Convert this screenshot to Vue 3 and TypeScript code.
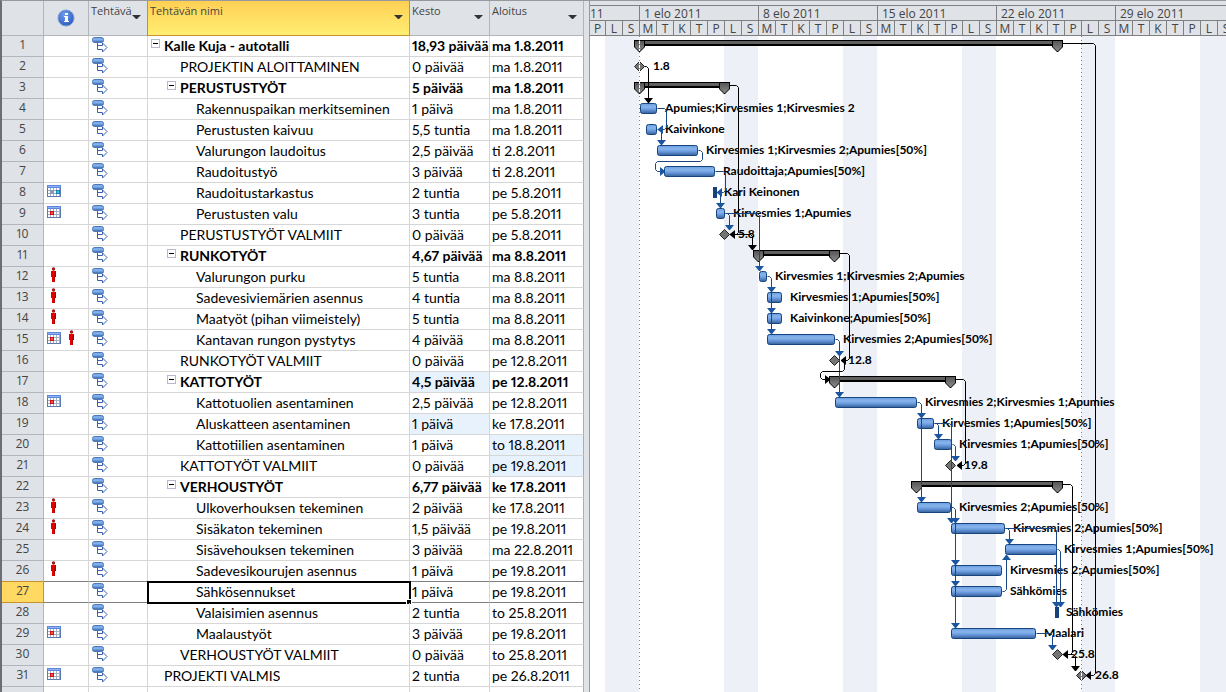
<script setup lang="ts">
type Kind = 'summary' | 'task' | 'milestone' | 'tick'
type Mark = 'cal' | 'calBlue' | 'person'

interface Task {
  id: number
  name: string
  level: number
  duration: string
  start: string
  kind: Kind
  from: number
  to: number
  label?: string
  labelX?: number
  marks?: Mark[]
  changed?: 'duration' | 'start'
}

const ROW = 21
const DAY = 17
const SELECTED = 27

// from, to and labelX are distances in pixels from Monday 1.8.2011
const tasks: Task[] = [
  { id: 1, name: 'Kalle Kuja - autotalli', level: 0, duration: '18,93 päivää', start: 'ma 1.8.2011', kind: 'summary', from: 0, to: 418 },
  { id: 2, name: 'PROJEKTIN ALOITTAMINEN', level: 1, duration: '0 päivää', start: 'ma 1.8.2011', kind: 'milestone', from: 0, to: 0, label: '1.8', labelX: 14 },
  { id: 3, name: 'PERUSTUSTYÖT', level: 1, duration: '5 päivää', start: 'ma 1.8.2011', kind: 'summary', from: 0, to: 85 },
  { id: 4, name: 'Rakennuspaikan merkitseminen', level: 2, duration: '1 päivä', start: 'ma 1.8.2011', kind: 'task', from: 1, to: 18, label: 'Apumies;Kirvesmies 1;Kirvesmies 2', labelX: 26 },
  { id: 5, name: 'Perustusten kaivuu', level: 2, duration: '5,5 tuntia', start: 'ma 1.8.2011', kind: 'task', from: 7, to: 18, label: 'Kaivinkone', labelX: 26 },
  { id: 6, name: 'Valurungon laudoitus', level: 2, duration: '2,5 päivää', start: 'ti 2.8.2011', kind: 'task', from: 18, to: 59, label: 'Kirvesmies 1;Kirvesmies 2;Apumies[50%]', labelX: 67 },
  { id: 7, name: 'Raudoitustyö', level: 2, duration: '3 päivää', start: 'ti 2.8.2011', kind: 'task', from: 25, to: 76, label: 'Raudoittaja;Apumies[50%]', labelX: 84 },
  { id: 8, name: 'Raudoitustarkastus', level: 2, duration: '2 tuntia', start: 'pe 5.8.2011', kind: 'tick', from: 74, to: 78, label: 'Kari Keinonen', labelX: 85, marks: ['calBlue'] },
  { id: 9, name: 'Perustusten valu', level: 2, duration: '3 tuntia', start: 'pe 5.8.2011', kind: 'task', from: 77, to: 86, label: 'Kirvesmies 1;Apumies', labelX: 94, marks: ['cal'] },
  { id: 10, name: 'PERUSTUSTYÖT VALMIIT', level: 1, duration: '0 päivää', start: 'pe 5.8.2011', kind: 'milestone', from: 85, to: 85, label: '5.8', labelX: 99 },
  { id: 11, name: 'RUNKOTYÖT', level: 1, duration: '4,67 päivää', start: 'ma 8.8.2011', kind: 'summary', from: 119, to: 195 },
  { id: 12, name: 'Valurungon purku', level: 2, duration: '5 tuntia', start: 'ma 8.8.2011', kind: 'task', from: 120, to: 128, label: 'Kirvesmies 1;Kirvesmies 2;Apumies', labelX: 136, marks: ['person'] },
  { id: 13, name: 'Sadevesiviemärien asennus', level: 2, duration: '4 tuntia', start: 'ma 8.8.2011', kind: 'task', from: 128, to: 143, label: 'Kirvesmies 1;Apumies[50%]', labelX: 151, marks: ['person'] },
  { id: 14, name: 'Maatyöt (pihan viimeistely)', level: 2, duration: '5 tuntia', start: 'ma 8.8.2011', kind: 'task', from: 128, to: 143, label: 'Kaivinkone;Apumies[50%]', labelX: 151, marks: ['person'] },
  { id: 15, name: 'Kantavan rungon pystytys', level: 2, duration: '4 päivää', start: 'ma 8.8.2011', kind: 'task', from: 128, to: 196, label: 'Kirvesmies 2;Apumies[50%]', labelX: 204, marks: ['cal', 'person'] },
  { id: 16, name: 'RUNKOTYÖT VALMIIT', level: 1, duration: '0 päivää', start: 'pe 12.8.2011', kind: 'milestone', from: 195, to: 195, label: '12.8', labelX: 209 },
  { id: 17, name: 'KATTOTYÖT', level: 1, duration: '4,5 päivää', start: 'pe 12.8.2011', kind: 'summary', from: 195, to: 311, changed: 'duration' },
  { id: 18, name: 'Kattotuolien asentaminen', level: 2, duration: '2,5 päivää', start: 'pe 12.8.2011', kind: 'task', from: 196, to: 278, label: 'Kirvesmies 2;Kirvesmies 1;Apumies', labelX: 286, marks: ['cal'] },
  { id: 19, name: 'Aluskatteen asentaminen', level: 2, duration: '1 päivä', start: 'ke 17.8.2011', kind: 'task', from: 278, to: 295, label: 'Kirvesmies 1;Apumies[50%]', labelX: 303, changed: 'duration' },
  { id: 20, name: 'Kattotiilien asentaminen', level: 2, duration: '1 päivä', start: 'to 18.8.2011', kind: 'task', from: 295, to: 313, label: 'Kirvesmies 1;Apumies[50%]', labelX: 320, changed: 'start' },
  { id: 21, name: 'KATTOTYÖT VALMIIT', level: 1, duration: '0 päivää', start: 'pe 19.8.2011', kind: 'milestone', from: 311, to: 311, label: '19.8', labelX: 325, changed: 'start' },
  { id: 22, name: 'VERHOUSTYÖT', level: 1, duration: '6,77 päivää', start: 'ke 17.8.2011', kind: 'summary', from: 277, to: 418 },
  { id: 23, name: 'Ulkoverhouksen tekeminen', level: 2, duration: '2 päivää', start: 'ke 17.8.2011', kind: 'task', from: 278, to: 312, label: 'Kirvesmies 2;Apumies[50%]', labelX: 320, marks: ['person'] },
  { id: 24, name: 'Sisäkaton tekeminen', level: 2, duration: '1,5 päivää', start: 'pe 19.8.2011', kind: 'task', from: 312, to: 366, label: 'Kirvesmies 2;Apumies[50%]', labelX: 374, marks: ['person'] },
  { id: 25, name: 'Sisävehouksen tekeminen', level: 2, duration: '3 päivää', start: 'ma 22.8.2011', kind: 'task', from: 366, to: 418, label: 'Kirvesmies 1;Apumies[50%]', labelX: 425 },
  { id: 26, name: 'Sadevesikourujen asennus', level: 2, duration: '1 päivä', start: 'pe 19.8.2011', kind: 'task', from: 312, to: 363, label: 'Kirvesmies 2;Apumies[50%]', labelX: 371, marks: ['person'] },
  { id: 27, name: 'Sähkösennukset', level: 2, duration: '1 päivä', start: 'pe 19.8.2011', kind: 'task', from: 312, to: 363, label: 'Sähkömies', labelX: 371 },
  { id: 28, name: 'Valaisimien asennus', level: 2, duration: '2 tuntia', start: 'to 25.8.2011', kind: 'tick', from: 416, to: 420, label: 'Sähkömies', labelX: 427 },
  { id: 29, name: 'Maalaustyöt', level: 2, duration: '3 päivää', start: 'pe 19.8.2011', kind: 'task', from: 312, to: 397, label: 'Maalari', labelX: 405, marks: ['cal'] },
  { id: 30, name: 'VERHOUSTYÖT VALMIIT', level: 1, duration: '0 päivää', start: 'to 25.8.2011', kind: 'milestone', from: 418, to: 418, label: '25.8', labelX: 432 },
  { id: 31, name: 'PROJEKTI VALMIS', level: 0, duration: '2 tuntia', start: 'pe 26.8.2011', kind: 'milestone', from: 442, to: 442, label: '26.8', labelX: 456, marks: ['cal'] },
]

const weeks = ['1 elo 2011', '8 elo 2011', '15 elo 2011', '22 elo 2011', '29 elo 2011']
const days = ['M', 'T', 'K', 'T', 'P', 'L', 'S']
const weekends = [-1, 0, 1, 2, 3, 4].map((w) => w * 7 * DAY + 5 * DAY)

const top = (id: number) => (id - 1) * ROW
const mid = (id: number) => top(id) + (tasks[id - 1].kind === 'summary' ? 7 : 9)
const tip = (id: number) => top(id) + (tasks[id - 1].kind === 'milestone' ? 5 : 4)

interface Link {
  tone: 'blue' | 'black'
  line: string
  heads: string
}

const headDown = (x: number, y: number) => `M${x - 4} ${y - 5}h9l-4 5h-1z`
const headUp = (x: number, y: number) => `M${x - 4} ${y + 5}h9l-4 -5h-1z`
const headLeft = (x: number, y: number) => `M${x} ${y}v1l5 4v-9z`
const headRight = (x: number, y: number) => `M${x} ${y}v1l-5 4v-9z`

function drop(tone: Link['tone'], x0: number, src: number, x: number, targets: number[]): Link {
  const y = mid(src)
  const end = tip(targets[targets.length - 1])
  return {
    tone,
    line: `M${x0} ${y}H${x - 2}l2 2V${end - 2}`,
    heads: targets.map((t) => headDown(x, tip(t))).join(''),
  }
}

function back(tone: Link['tone'], x0: number, src: number, x: number, dst: number, head: number): Link {
  return {
    tone,
    line: `M${x0} ${mid(src)}H${x - 2}l2 2V${mid(dst) - 2}l-2 2H${head + 2}`,
    heads: headLeft(head, mid(dst)),
  }
}

function wrap(tone: Link['tone'], x0: number, src: number, x: number, left: number, dst: number, head: number): Link {
  const y = top(dst) - 1
  return {
    tone,
    line: `M${x0} ${mid(src)}H${x - 2}l2 2V${y - 2}l-2 2H${left + 2}l-2 2V${mid(dst) - 2}l2 2H${head - 2}`,
    heads: headRight(head, mid(dst)),
  }
}

const links: Link[] = [
  drop('black', 5, 2, 9, [4]),
  back('black', 90, 3, 99, 10, 91),
  back('blue', 18, 4, 27, 5, 19),
  drop('blue', 18, 5, 22, [6]),
  wrap('blue', 59, 6, 63, 16, 7, 26),
  back('blue', 76, 7, 86, 8, 78),
  drop('blue', 78, 8, 81, [9]),
  drop('blue', 86, 9, 90, [10]),
  drop('blue', 86, 9, 120, [12]),
  drop('black', 91, 10, 113, [11]),
  drop('blue', 128, 12, 132, [13, 14, 15]),
  back('black', 200, 11, 210, 16, 202),
  drop('blue', 196, 15, 200, [16, 18]),
  wrap('black', 202, 16, 205, 181, 17, 191),
  back('black', 316, 17, 326, 21, 318),
  drop('blue', 278, 18, 282, [19, 23]),
  drop('blue', 295, 19, 299, [20]),
  drop('blue', 295, 19, 312, [24]),
  drop('blue', 313, 20, 316, [21]),
  back('black', 423, 22, 433, 30, 424),
  drop('blue', 312, 23, 316, [24, 26, 27, 29]),
  drop('blue', 366, 24, 370, [25]),
  drop('blue', 366, 24, 417, [28]),
  drop('blue', 418, 25, 421, [28]),
  {
    tone: 'blue',
    line: `M363 ${mid(27)}h2l2 -2V${top(25) + 17}`,
    heads: headUp(367, top(25) + 15),
  },
  drop('blue', 397, 29, 413, [30]),
  drop('black', 424, 30, 436, [31]),
  back('black', 423, 1, 456, 31, 447),
]

const cap = (x: number, id: number) => `M${x - 5} ${top(id) + 4}h11v7l-5 5h-1l-5 -5z`
</script>

<template>
  <main class="app">
    <section class="sheet">
      <table>
        <colgroup>
          <col class="c-id" /><col class="c-info" /><col class="c-mode" /><col class="c-name" /><col class="c-dur" /><col class="c-start" />
        </colgroup>
        <thead>
          <tr>
            <th></th>
            <th>
              <svg class="info" width="18" height="18" viewBox="0 0 18 18" role="img" aria-label="Ilmaisimet">
                <defs>
                  <radialGradient id="infoFill" cx="0.4" cy="0.3" r="0.8">
                    <stop offset="0" stop-color="#6f9cf0" />
                    <stop offset="1" stop-color="#2455b5" />
                  </radialGradient>
                </defs>
                <circle cx="9" cy="9" r="8" fill="url(#infoFill)" stroke="#7d9cd6" />
                <path d="M8 4h3v2H8zM7 7h4v5h1v1H7v-1h1V8H7z" fill="#fff" />
              </svg>
            </th>
            <th><div class="head"><span>Tehtävä</span><button type="button" aria-label="Suodata tehtävätila"></button></div></th>
            <th class="active"><div class="head"><span>Tehtävän nimi</span><button type="button" aria-label="Suodata tehtävän nimi"></button></div></th>
            <th><div class="head"><span>Kesto</span><button type="button" aria-label="Suodata kesto"></button></div></th>
            <th><div class="head"><span>Aloitus</span><button type="button" aria-label="Suodata aloitus"></button></div></th>
          </tr>
        </thead>
        <tbody>
          <tr v-for="t in tasks" :key="t.id" :class="{ summary: t.kind === 'summary', selected: t.id === SELECTED, before: t.id === SELECTED - 1 }">
            <th scope="row">{{ t.id }}</th>
            <td>
              <div class="marks">
                <template v-for="m in t.marks" :key="m">
                  <svg v-if="m === 'person'" width="14" height="16" viewBox="0 0 14 16">
                    <circle cx="6.5" cy="2" r="1.7" fill="#a01818" />
                    <path d="M4 4h5v6H8v5H5v-5H4z" fill="#e60000" />
                    <path d="M8 4h1v6H8v5H7V10z" fill="#b00000" />
                  </svg>
                  <svg v-else width="14" height="16" viewBox="0 0 14 16" shape-rendering="crispEdges">
                    <rect x="0" y="2" width="14" height="12" fill="#5b7bb0" />
                    <rect x="0" y="2" width="14" height="3" fill="#5c87de" />
                    <rect x="1" y="3" width="12" height="1" fill="#8fb2f4" />
                    <rect x="1" y="5" width="12" height="8" fill="#fff" />
                    <path d="M1 7.5h12M1 10.5h12M3.5 5v8M6.5 5v8M9.5 5v8M12.5 5v8" stroke="#a3aec2" fill="none" />
                    <template v-if="m === 'cal'">
                      <rect x="3" y="7" width="4" height="4" fill="#d01010" />
                      <rect x="4" y="8" width="2" height="2" fill="#ff5040" />
                    </template>
                    <template v-else>
                      <rect x="3" y="7" width="4" height="4" fill="#8898b0" />
                      <rect x="9" y="7" width="4" height="4" fill="#1580b8" />
                      <rect x="10" y="8" width="2" height="2" fill="#30c8f8" />
                    </template>
                  </svg>
                </template>
              </div>
            </td>
            <td>
              <svg class="mode" width="16" height="18" viewBox="0 0 16 18">
                <path d="M5.5 6V13.5H10.5V16L15 11.500L10.500 7V9.500H6" fill="#fff" stroke="#3a5fae" />
                <rect x="0.500" y="1.500" width="11" height="5" rx="2" fill="url(#barFill)" stroke="#4a78ba" />
              </svg>
            </td>
            <td class="name" :class="'l' + t.level">
              <div class="title">
                <span class="slot"><button v-if="t.kind === 'summary'" type="button" :aria-label="'Kutista ' + t.name"></button></span>
                <span>{{ t.name }}</span>
              </div>
              <div v-if="t.id === SELECTED" class="cursor"></div>
            </td>
            <td :class="{ changed: t.changed === 'duration' }">{{ t.duration }}</td>
            <td :class="{ changed: t.changed === 'start' }">{{ t.start }}</td>
          </tr>
          <tr><th></th><td></td><td></td><td></td><td></td><td></td></tr>
        </tbody>
      </table>
    </section>

    <div class="splitter"></div>

    <section class="gantt">
      <header class="scale">
        <div class="week first">
          <div class="date">11</div>
          <div class="days"><span>P</span><span>L</span><span>S</span></div>
        </div>
        <div v-for="w in weeks" :key="w" class="week">
          <div class="date">{{ w }}</div>
          <div class="days"><span v-for="(d, i) in days" :key="i">{{ d }}</span></div>
        </div>
      </header>
      <svg class="chart" role="img" aria-label="Gantt-kaavio">
        <defs>
          <linearGradient id="barFill" x1="0" y1="0" x2="0" y2="1">
            <stop offset="0" stop-color="#6a9de0" />
            <stop offset="0.35" stop-color="#8ab5ec" />
            <stop offset="0.6" stop-color="#6a9ade" />
            <stop offset="1" stop-color="#345f98" />
          </linearGradient>
          <linearGradient id="capFill" x1="0" y1="0" x2="0" y2="1">
            <stop offset="0" stop-color="#555" />
            <stop offset="1" stop-color="#8a8a8a" />
          </linearGradient>
        </defs>
        <g transform="translate(49 0)">
          <rect v-for="x in weekends" :key="x" :x="x" y="0" :width="DAY * 2" height="100%" fill="#edf1f7" />

          <g v-for="t in tasks" :key="t.id">
            <template v-if="t.kind === 'summary'">
              <rect :x="t.from" :y="top(t.id) + 4" :width="t.to - t.from" height="6" fill="#000" />
              <rect :x="t.from" :y="top(t.id) + 5" :width="t.to - t.from" height="3" fill="#606060" />
              <path v-for="x in [t.from, t.to]" :key="x" :d="cap(x, t.id)" fill="#000" />
              <path v-for="x in [t.from, t.to]" :key="'f' + x" :d="`M${x - 4} ${top(t.id) + 5}h9v6l-4 4h-1l-4 -4z`" fill="url(#capFill)" />
            </template>
            <rect v-else-if="t.kind === 'task'" class="bar" :x="t.from + 0.5" :y="top(t.id) + 4.5" :width="t.to - t.from - 1" height="10" rx="2" />
            <rect v-else-if="t.kind === 'tick'" :x="t.from" :y="top(t.id) + 4" :width="t.to - t.from" height="11" fill="#15427a" />
            <path v-else :d="`M${t.from - 4.500} ${top(t.id) + 9.5}l5 -5l5 5l-5 5z`" fill="#757575" stroke="#222" />
          </g>

          <g v-for="x in [0, 442]" :key="x">
            <path v-for="t in tasks.filter((k) => k.from === x && k.kind !== 'task')" :key="t.id" :d="`M${x + 0.5} ${top(t.id) + 4}v11`" stroke="#fff" />
            <line :x1="x + 0.5" y1="0" :x2="x + 0.5" y2="100%" stroke="#808080" stroke-dasharray="1 3" />
          </g>

          <text v-for="t in tasks.filter((k) => k.label)" :key="t.id" :x="t.labelX" :y="top(t.id) + 13">{{ t.label }}</text>

          <g transform="translate(0.5 0.5)">
            <path v-for="(l, i) in links" :key="i" :d="l.line" :class="['link', l.tone]" />
          </g>
          <path v-for="(l, i) in links" :key="'h' + i" :d="l.heads" :class="['arrow', l.tone]" />
        </g>
      </svg>
    </section>
  </main>
</template>

<style>
html,
body {
  margin: 0;
  background: #fff;
}
</style>

<style scoped>
.app {
  display: flex;
  height: 100vh;
  overflow: hidden;
  box-sizing: border-box;
  border-top: 1px solid #96999e;
  border-left: 2px solid #6b6e74;
  background: #fff;
  color: #000;
  font-family: Lato, "Liberation Sans", sans-serif;
  font-size: 14px;
}

.sheet {
  flex: none;
}

table {
  width: 582px;
  table-layout: fixed;
  border-collapse: separate;
  border-spacing: 0;
  font-variant-numeric: proportional-nums;
}

.c-id { width: 42px; }
.c-info { width: 45px; }
.c-mode { width: 59px; }
.c-name { width: 262px; }
.c-dur { width: 80px; }
.c-start { width: 94px; }

th,
td {
  box-sizing: border-box;
  height: 21px;
  padding: 0 0 0 2px;
  border-right: 1px solid #d6d6d6;
  border-bottom: 1px solid #d6d6d6;
  line-height: 20px;
  text-align: left;
  white-space: nowrap;
}

td:last-child {
  border-right-color: #a9adb4;
}

thead th,
tbody th {
  background: #dfe2e7;
  border-color: #b1b5bc;
  color: #444;
  font-family: "Open Sans", "Noto Sans", sans-serif;
  font-weight: 400;
}

thead th {
  height: 35px;
  padding: 0;
  font-size: 11px;
  vertical-align: top;
}

tbody th {
  padding: 0;
  font-size: 12px;
  line-height: 18px;
  text-align: center;
  vertical-align: top;
}

thead .active {
  background: linear-gradient(#ffd054, #ffee72);
  border-color: #c8922e;
  box-shadow: -1px 0 0 #c8922e;
}

.info {
  display: block;
  margin: 8px auto 0;
}

.head {
  display: flex;
  justify-content: space-between;
  padding: 0 6px 0 2px;
}

.head button {
  flex: none;
  width: 9px;
  height: 20px;
  margin-top: 6px;
  padding: 0;
  border: 0;
  background: none;
}

.head button::before {
  content: "";
  display: block;
  border: 4px solid transparent;
  border-top-color: #333;
  border-bottom: 0;
}

.marks {
  display: flex;
  gap: 4px;
  height: 20px;
  padding-left: 1px;
}

.mode {
  display: block;
  margin-left: 1px;
  margin-top: -2px;
}

.summary td {
  font-weight: 700;
}

.name {
  position: relative;
}

.title {
  display: flex;
}

.l1 { padding-left: 18px; }
.l2 { padding-left: 34px; }

.slot {
  flex: none;
  width: 14px;
  padding-left: 1px;
  box-sizing: border-box;
}

.slot button {
  display: flex;
  align-items: center;
  justify-content: center;
  width: 9px;
  height: 9px;
  margin-top: 3px;
  padding: 0;
  border: 1px solid #b4bccb;
  background: #fff;
}

.slot button::before {
  content: "";
  width: 5px;
  height: 1px;
  background: #000;
}

.changed {
  background: #e8f2fd;
}

.before td,
.selected td {
  border-bottom-color: #7f7f7f;
}

tbody .before th {
  border-bottom-color: #c8922e;
}

tbody .selected th {
  background: #ffd961;
  border-color: #c8922e;
}

.cursor {
  position: absolute;
  inset: -1px -2px -2px -1px;
  border: 2px solid #000;
}

.cursor::after {
  content: "";
  position: absolute;
  right: -3px;
  bottom: -3px;
  width: 4px;
  height: 4px;
  border: 1px solid #fff;
  background: #000;
}

.splitter {
  flex: none;
  width: 5px;
  border-right: 1px solid #96999e;
  background: #dfe2e7;
}

.gantt {
  display: flex;
  flex: 1;
  flex-direction: column;
  min-width: 0;
  overflow: hidden;
}

.scale {
  display: flex;
  flex: none;
  padding-top: 4px;
  overflow: hidden;
  background: #dfe2e7;
  color: #444;
  font-family: "Open Sans", "Noto Sans", sans-serif;
  font-size: 12px;
}

.week {
  flex: none;
  box-sizing: border-box;
  width: 119px;
  border-top: 1px solid #808080;
}

.first {
  width: 49px;
}

.date,
.days span {
  box-sizing: border-box;
  height: 15px;
  border-bottom: 1px solid #808080;
  border-left: 1px solid #808080;
  line-height: 15px;
}

.date {
  padding-left: 4px;
}

.first .date {
  padding-left: 0;
  border-left: 0;
}

.days {
  display: flex;
}

.days span {
  width: 17px;
  text-align: center;
}

.first span:first-child {
  width: 15px;
  border-left: 0;
}

.chart {
  display: block;
  flex: 1;
  width: 100%;
}

.chart text {
  font-size: 12px;
  font-weight: 700;
}

.bar {
  fill: url(#barFill);
  stroke: #17457f;
}

.link {
  fill: none;
  stroke-width: 1;
}

.link.blue { stroke: #1a4783; }
.link.black { stroke: #000; }
.arrow.blue { fill: #1c559f; }
.arrow.black { fill: #000; }
</style>
